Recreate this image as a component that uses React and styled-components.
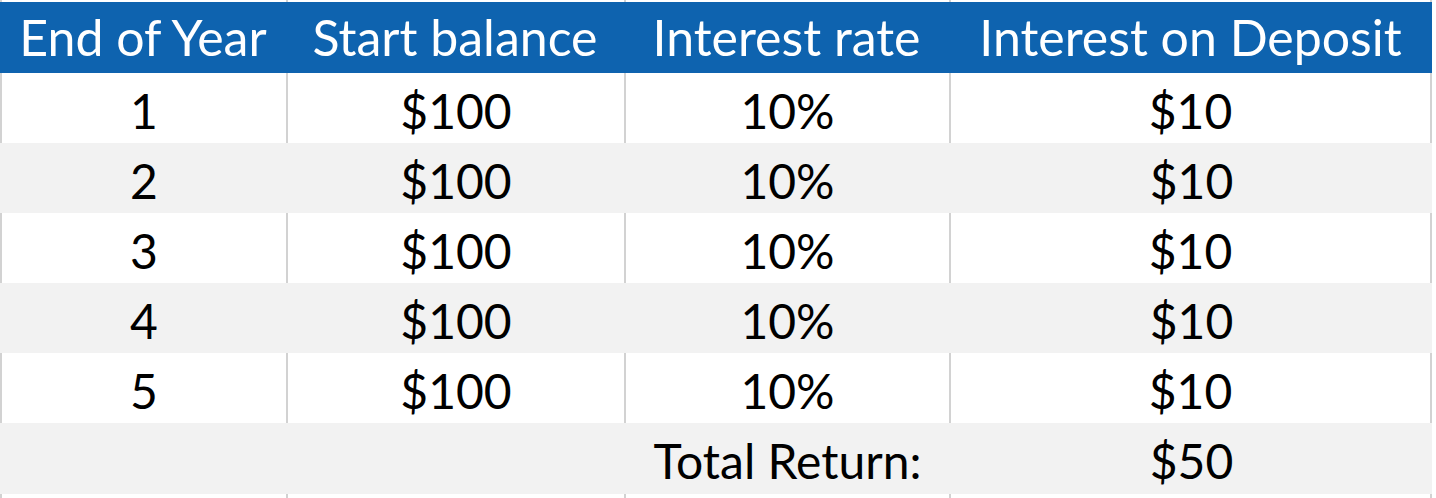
import React from "react";
import styled, { createGlobalStyle } from "styled-components";

const GlobalStyle = createGlobalStyle`
  html, body {
    margin: 0;
    padding: 0;
    background: #fff;
  }
  body {
    font-family: Lato, "Open Sans", sans-serif;
  }
`;

const COLS = "286px 338px 325px 483px";

const Sheet = styled.div`
  width: 1432px;
  display: flex;
  flex-direction: column;
`;

const Row = styled.div`
  display: grid;
  grid-template-columns: ${COLS};
  height: ${(p) => p.$h || 70}px;
  background: ${(p) => (p.$shade ? "#f2f2f2" : "#fff")};
`;

const HeaderRow = styled.div`
  display: grid;
  grid-template-columns: ${COLS};
  height: 71px;
  background: #0e63af;
`;

const Cell = styled.div`
  display: flex;
  align-items: center;
  justify-content: center;
  box-sizing: border-box;
  border-left: 2px solid ${(p) => (p.$lines ? "#d2d2d2" : "transparent")};
  border-right: ${(p) => (p.$last && p.$lines ? "2px solid #d2d2d2" : "none")};
  font-size: 48px;
  color: #000;
  white-space: nowrap;
  padding-top: 4px;
`;

const HeadCell = styled.div`
  display: flex;
  align-items: center;
  justify-content: center;
  font-size: 50px;
  color: #fff;
  white-space: nowrap;
  padding-bottom: 2px;
`;

const Strip = ({ h }) => (
  <Row $h={h}>
    {[0, 1, 2, 3].map((i) => (
      <Cell key={i} $lines $last={i === 3} />
    ))}
  </Row>
);

const headers = ["End of Year", "Start balance", "Interest rate", "Interest on Deposit"];

const rows = [1, 2, 3, 4, 5].map((y) => [String(y), "$100", "10%", "$10"]);

export default function App() {
  return (
    <>
      <GlobalStyle />
      <Sheet>
        <Strip h={2} />
        <HeaderRow>
          {headers.map((h) => (
            <HeadCell key={h}>{h}</HeadCell>
          ))}
        </HeaderRow>
        {rows.map((r, i) => {
          const shade = i % 2 === 1;
          return (
            <Row key={i} $shade={shade}>
              {r.map((v, j) => (
                <Cell key={j} $lines={!shade} $last={j === 3}>
                  {v}
                </Cell>
              ))}
            </Row>
          );
        })}
        <Row $shade $h={71}>
          <Cell />
          <Cell />
          <Cell>Total Return:</Cell>
          <Cell $last>$50</Cell>
        </Row>
        <Strip h={4} />
      </Sheet>
    </>
  );
}
